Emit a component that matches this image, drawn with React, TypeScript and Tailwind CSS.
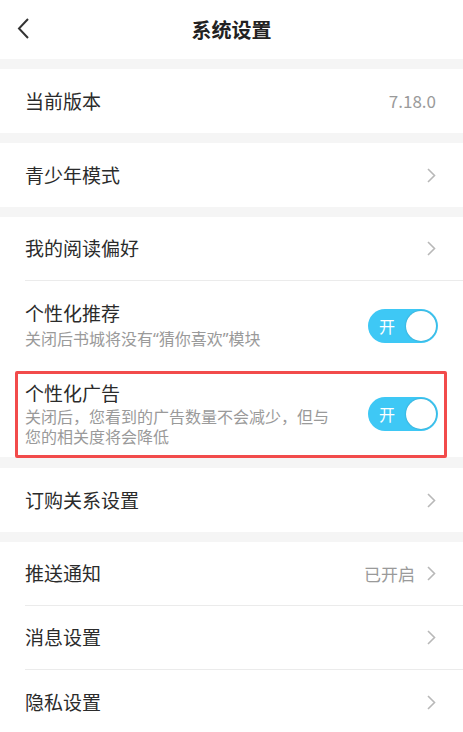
import React from "react";

const font = { fontFamily: '"Noto Sans CJK SC", "Noto Sans", sans-serif' };
const latin = { fontFamily: '"Noto Sans", sans-serif' };

function Chevron() {
  return (
    <svg width="9" height="15" viewBox="0 0 9 15" fill="none" className="shrink-0">
      <path d="M1 1l6.5 6.5L1 14" stroke="#b8b8b8" strokeWidth="1.6" />
    </svg>
  );
}

function Gap({ h = "h-[10px]" }: { h?: string }) {
  return <div className={`${h} bg-[#f5f5f5]`} />;
}

function Row({
  title,
  value,
  arrow = true,
  divider = false,
}: {
  title: string;
  value?: string;
  arrow?: boolean;
  divider?: boolean;
}) {
  return (
    <div className="relative">
      <div
        className={`flex ${divider ? "h-[63px]" : "h-[64px]"} items-center justify-between pl-[25px] pr-[27px]`}
      >
        <span className="text-[19px] text-[#2b2b2b]">{title}</span>
        <div className="flex items-center gap-[12px]">
          {value && <span className="text-[17px] text-[#9a9a9a]">{value}</span>}
          {arrow && <Chevron />}
        </div>
      </div>
      {divider && <div className="ml-[25px] h-px bg-[#ebebeb]" />}
    </div>
  );
}

function Toggle() {
  return (
    <div className="flex h-[34px] w-[70px] shrink-0 items-center justify-between rounded-full bg-[#3ec8f5] pl-[11px] pr-[2px]">
      <span className="text-[16px] text-white">开</span>
      <div className="h-[30px] w-[30px] rounded-full bg-white shadow-[0_0_2px_rgba(0,0,0,0.25)]" />
    </div>
  );
}

export default function App() {
  return (
    <div className="min-h-screen bg-white" style={font}>
      {/* header */}
      <div className="relative flex h-[59px] items-center justify-center">
        <svg
          width="14"
          height="24"
          viewBox="0 0 14 24"
          fill="none"
          className="absolute left-[16px] top-[17px]"
        >
          <path d="M12 2L3 11.5 12 21" stroke="#333" strokeWidth="2" />
        </svg>
        <h1 className="text-[20px] font-bold text-[#222]">系统设置</h1>
      </div>
      <Gap />
      <Row title="当前版本" value="7.18.0" arrow={false} />
      <Gap />
      <Row title="青少年模式" />
      <Gap />
      <Row title="我的阅读偏好" divider />

      <div className="flex h-[89px] items-center justify-between pl-[25px] pr-[25px]">
        <div className="flex flex-col pb-[3px]">
          <span className="text-[19px] leading-[28px] text-[#2b2b2b]">个性化推荐</span>
          <span className="text-[16px] leading-[22px] text-[#9a9a9a]">
            关闭后书城将没有<span style={latin}>“</span>猜你喜欢
            <span style={latin}>”</span>模块
          </span>
        </div>
        <Toggle />
      </div>

      <div className="relative flex h-[87px] items-center justify-between pl-[25px] pr-[25px]">
        <div className="flex w-[310px] flex-col pb-[3px]">
          <span className="text-[19px] leading-[27px] text-[#2b2b2b]">个性化广告</span>
          <span className="block text-[16px] leading-[20px] text-[#9a9a9a]">
            关闭后，您看到的广告数量不会减少，但与
          </span>
          <span className="block text-[16px] leading-[20px] text-[#9a9a9a]">
            您的相关度将会降低
          </span>
        </div>
        <Toggle />
        <div className="pointer-events-none absolute left-[15px] right-[16px] top-[1px] bottom-[-1px] rounded-[2px] border-[3px] border-[#f24b4b]" />
      </div>

      <Gap h="h-[11px]" />
      <Row title="订购关系设置" />
      <Gap />
      <Row title="推送通知" value="已开启" divider />
      <Row title="消息设置" divider />
      <Row title="隐私设置" />
    </div>
  );
}
